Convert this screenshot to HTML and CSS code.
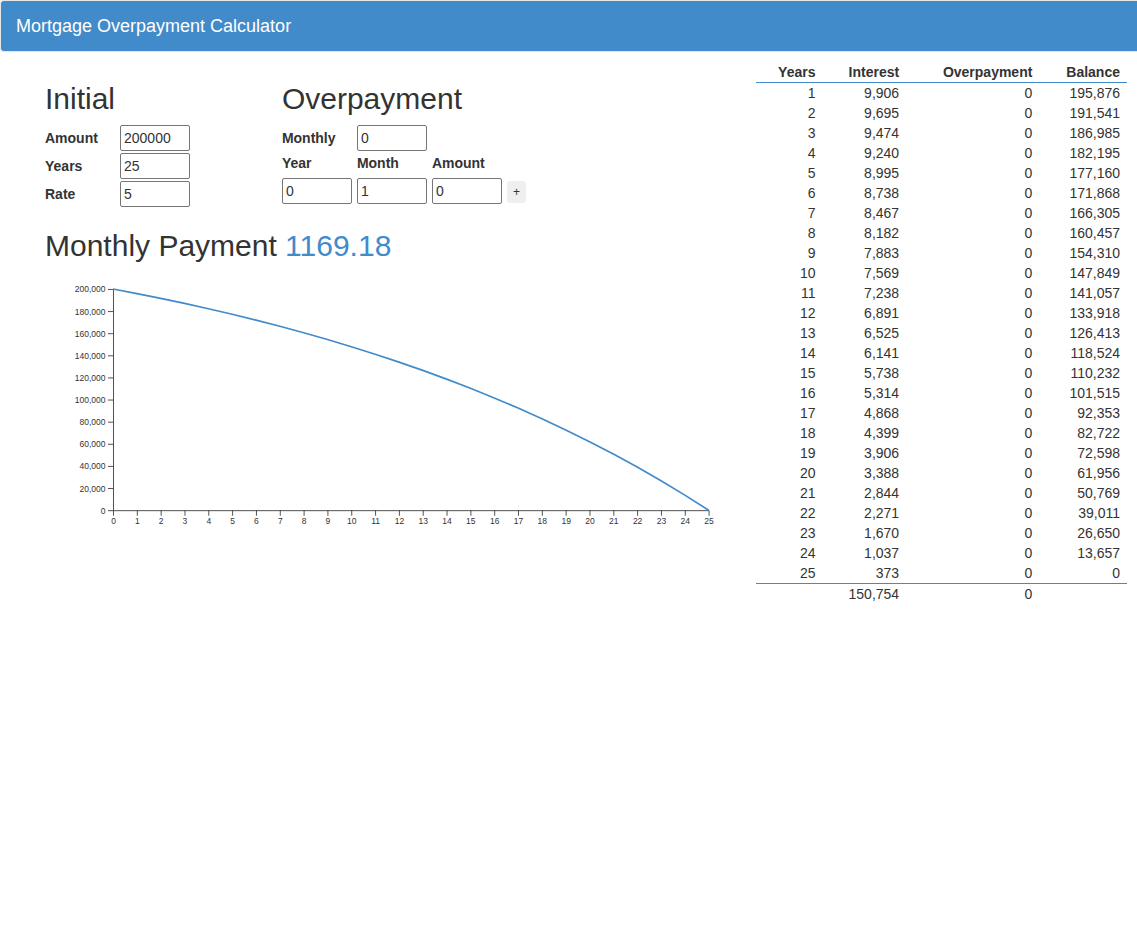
FILE: index.html
```html
<!DOCTYPE html>
<html lang="en">
<head>
<meta charset="utf-8">
<title>Mortgage Overpayment Calculator</title>
<link rel="stylesheet" href="styles.css">
</head>
<body>
<header class="navbar"><a class="brand" href="#">Mortgage Overpayment Calculator</a></header>
<div class="layout">
  <main class="main">
    <form class="forms">
      <section class="initial">
        <h2>Initial</h2>
        <div class="fields">
          <label for="amount">Amount</label><input id="amount" type="text" value="200000">
          <label for="years">Years</label><input id="years" type="text" value="25">
          <label for="rate">Rate</label><input id="rate" type="text" value="5">
        </div>
      </section>
      <section class="overpayment">
        <h2>Overpayment</h2>
        <div class="fields">
          <label for="monthly">Monthly</label><input id="monthly" type="text" value="0">
        </div>
        <div class="extra">
          <label for="op-year">Year</label>
          <label for="op-month">Month</label>
          <label class="last-label" for="op-amount">Amount</label>
          <input id="op-year" type="text" value="0">
          <input id="op-month" type="text" value="1">
          <input id="op-amount" type="text" value="0">
          <button class="add" type="button">+</button>
        </div>
      </section>
    </form>
    <h2>Monthly Payment <span class="payment">1169.18</span></h2>
    <svg class="chart" viewBox="0 0 800 300" role="img" aria-label="Balance by year">
      <g transform="translate(80,20)">
        <path class="axis" d="M-6 .5H.5V260.5H-6M.5 266.5V260.5H700.5V266.5"/>
        <path class="axis" d="M-6 26.5H0M-6 52.5H0M-6 78.5H0M-6 104.5H0M-6 130.5H0M-6 156.5H0M-6 182.5H0M-6 208.5H0M-6 234.5H0"/>
        <path class="axis" d="M28.5 260v6.5M56.5 260v6.5M84.5 260v6.5M112.5 260v6.5M140.5 260v6.5M168.5 260v6.5M196.5 260v6.5M224.5 260v6.5M252.5 260v6.5M280.5 260v6.5M308.5 260v6.5M336.5 260v6.5M364.5 260v6.5M392.5 260v6.5M420.5 260v6.5M448.5 260v6.5M476.5 260v6.5M504.5 260v6.5M532.5 260v6.5M560.5 260v6.5M588.5 260v6.5M616.5 260v6.5M644.5 260v6.5M672.5 260v6.5"/>
        <g class="y-labels">
          <text x="-9" y="4">200,000</text><text x="-9" y="30">180,000</text><text x="-9" y="56">160,000</text><text x="-9" y="82">140,000</text><text x="-9" y="108">120,000</text><text x="-9" y="134">100,000</text><text x="-9" y="160">80,000</text><text x="-9" y="186">60,000</text><text x="-9" y="212">40,000</text><text x="-9" y="238">20,000</text><text x="-9" y="264">0</text>
        </g>
        <g class="x-labels" transform="translate(.5,0)">
          <text x="0" y="276">0</text><text x="28" y="276">1</text><text x="56" y="276">2</text><text x="84" y="276">3</text><text x="112" y="276">4</text><text x="140" y="276">5</text><text x="168" y="276">6</text><text x="196" y="276">7</text><text x="224" y="276">8</text><text x="252" y="276">9</text><text x="280" y="276">10</text><text x="308" y="276">11</text><text x="336" y="276">12</text><text x="364" y="276">13</text><text x="392" y="276">14</text><text x="420" y="276">15</text><text x="448" y="276">16</text><text x="476" y="276">17</text><text x="504" y="276">18</text><text x="532" y="276">19</text><text x="560" y="276">20</text><text x="588" y="276">21</text><text x="616" y="276">22</text><text x="644" y="276">23</text><text x="672" y="276">24</text><text x="700" y="276">25</text>
        </g>
        <polyline class="curve" points="0,0 28,5.36 56,11 84,16.92 112,23.15 140,29.69 168,36.57 196,43.8 224,51.41 252,59.4 280,67.8 308,76.63 336,85.91 364,95.66 392,105.92 420,116.7 448,128.03 476,139.94 504,152.46 532,165.62 560,179.46 588,194 616,209.29 644,225.36 672,242.25 700,260"/>
      </g>
    </svg>
  </main>
  <aside class="schedule">
    <table>
      <thead><tr><th scope="col">Years</th><th scope="col">Interest</th><th scope="col">Overpayment</th><th scope="col">Balance</th></tr></thead>
      <tbody>
        <tr><td>1</td><td>9,906</td><td>0</td><td>195,876</td></tr>
        <tr><td>2</td><td>9,695</td><td>0</td><td>191,541</td></tr>
        <tr><td>3</td><td>9,474</td><td>0</td><td>186,985</td></tr>
        <tr><td>4</td><td>9,240</td><td>0</td><td>182,195</td></tr>
        <tr><td>5</td><td>8,995</td><td>0</td><td>177,160</td></tr>
        <tr><td>6</td><td>8,738</td><td>0</td><td>171,868</td></tr>
        <tr><td>7</td><td>8,467</td><td>0</td><td>166,305</td></tr>
        <tr><td>8</td><td>8,182</td><td>0</td><td>160,457</td></tr>
        <tr><td>9</td><td>7,883</td><td>0</td><td>154,310</td></tr>
        <tr><td>10</td><td>7,569</td><td>0</td><td>147,849</td></tr>
        <tr><td>11</td><td>7,238</td><td>0</td><td>141,057</td></tr>
        <tr><td>12</td><td>6,891</td><td>0</td><td>133,918</td></tr>
        <tr><td>13</td><td>6,525</td><td>0</td><td>126,413</td></tr>
        <tr><td>14</td><td>6,141</td><td>0</td><td>118,524</td></tr>
        <tr><td>15</td><td>5,738</td><td>0</td><td>110,232</td></tr>
        <tr><td>16</td><td>5,314</td><td>0</td><td>101,515</td></tr>
        <tr><td>17</td><td>4,868</td><td>0</td><td>92,353</td></tr>
        <tr><td>18</td><td>4,399</td><td>0</td><td>82,722</td></tr>
        <tr><td>19</td><td>3,906</td><td>0</td><td>72,598</td></tr>
        <tr><td>20</td><td>3,388</td><td>0</td><td>61,956</td></tr>
        <tr><td>21</td><td>2,844</td><td>0</td><td>50,769</td></tr>
        <tr><td>22</td><td>2,271</td><td>0</td><td>39,011</td></tr>
        <tr><td>23</td><td>1,670</td><td>0</td><td>26,650</td></tr>
        <tr><td>24</td><td>1,037</td><td>0</td><td>13,657</td></tr>
        <tr><td>25</td><td>373</td><td>0</td><td>0</td></tr>
      </tbody>
      <tfoot><tr><td></td><td>150,754</td><td>0</td><td></td></tr></tfoot>
    </table>
  </aside>
</div>
</body>
</html>
```
FILE: styles.css
```css
* {
  box-sizing: border-box;
}

body {
  margin: 0;
  background: #fff;
  color: #333;
  font-family: "Liberation Sans", Arial, sans-serif;
  font-size: 14px;
  line-height: 20px;
}

.navbar {
  padding: 15px;
  background: #428bca;
  border: 1px solid #e7e7e7;
  border-right: 0;
  border-radius: 4px 0 0 4px;
}

.brand {
  display: block;
  color: #fff;
  font-size: 18px;
  text-decoration: none;
}

.layout {
  display: grid;
  grid-template-columns: minmax(0, 11fr) minmax(0, 6fr);
  gap: 30px;
  padding: 10px 10px 0 45px;
}

.main {
  padding-top: 20px;
}

h2 {
  margin: 0 0 10px;
  font-size: 30px;
  font-weight: 500;
  line-height: 33px;
}

.forms {
  display: grid;
  grid-template-columns: repeat(3, minmax(0, 1fr));
  gap: 30px;
  margin-bottom: 22px;
}

.overpayment {
  grid-column: span 2;
}

.fields {
  display: grid;
  grid-template-columns: 70px 70px;
  gap: 2px 5px;
  align-items: center;
}

label {
  font-weight: 700;
}

input {
  width: 70px;
  height: 26px;
  padding: 0 3px;
  border: 1px solid #767676;
  border-radius: 2px;
  background: #fff;
  color: #333;
  font: inherit;
}

.extra {
  display: grid;
  grid-template-columns: 70px 70px 70px 19px;
  gap: 5px;
  align-items: center;
  margin-top: 2px;
}

.last-label {
  grid-column: span 2;
}

.add {
  height: 22px;
  margin-top: 2px;
  padding: 0;
  border: 0;
  border-radius: 3px;
  background: #efefef;
  color: #333;
  font: 12px/18px "Liberation Sans", Arial, sans-serif;
}

.payment {
  display: inline-block;
  color: #428bca;
}

.chart {
  display: block;
  width: 100%;
}

.chart text {
  fill: #333;
  font-size: 10px;
}

.y-labels {
  text-anchor: end;
}

.x-labels {
  text-anchor: middle;
}

.axis {
  fill: none;
  stroke: #333;
}

.curve {
  fill: none;
  stroke: #428bca;
  stroke-width: 2;
}

table {
  width: 100%;
  border-collapse: collapse;
}

th,
td {
  height: 20px;
  padding: 0 7px 0 8px;
  text-align: right;
}

thead tr {
  border-bottom: 1px solid #428bca;
}

tfoot tr {
  border-top: 1px solid #428bca;
}
```
